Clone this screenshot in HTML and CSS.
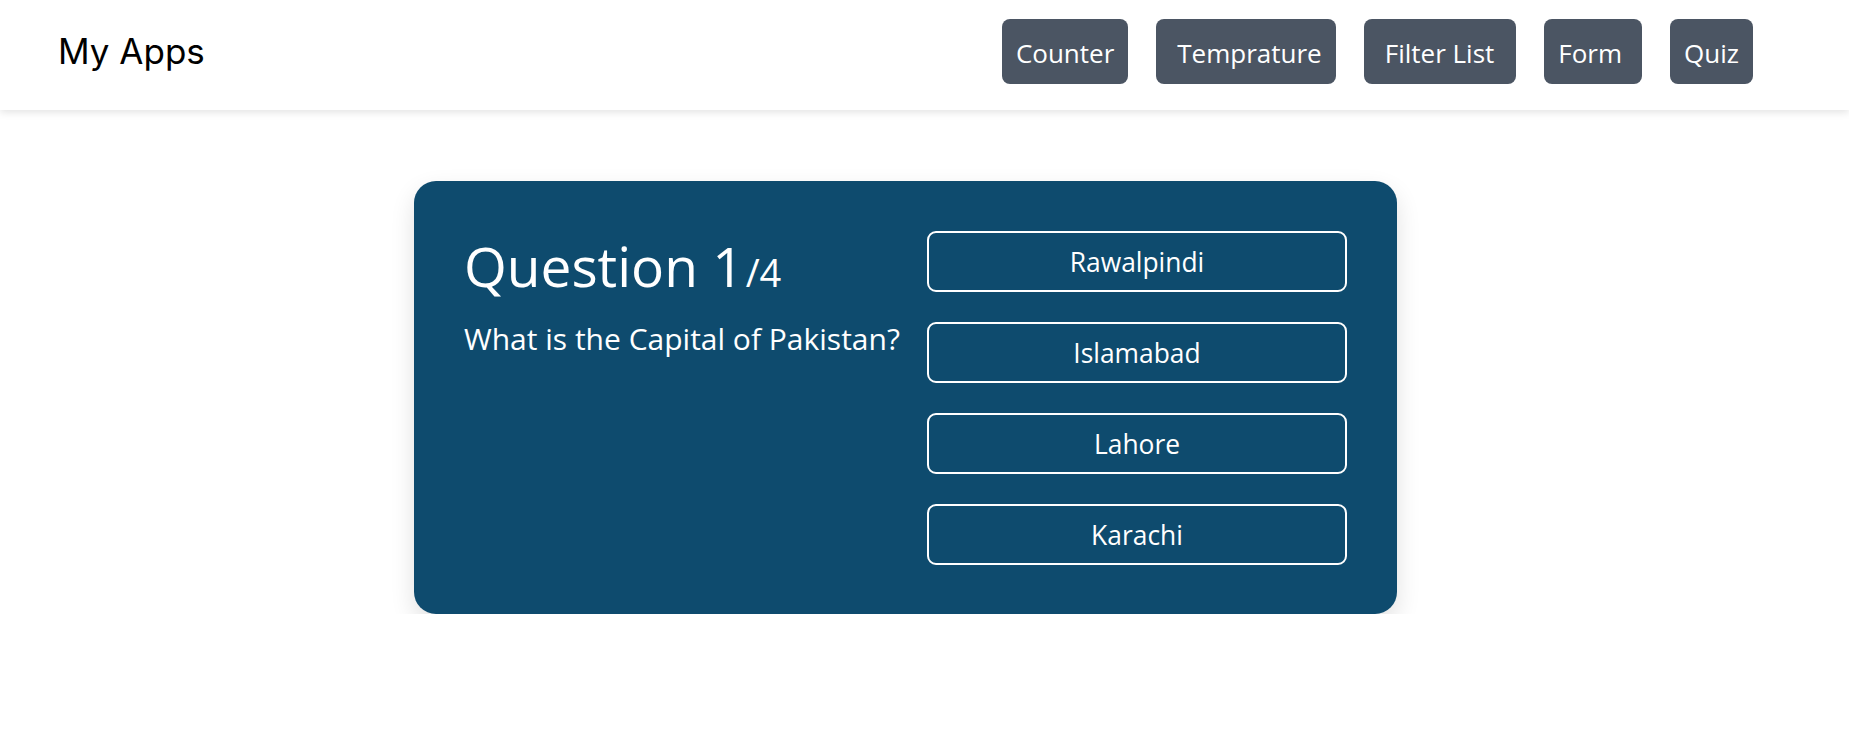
FILE: index.html
```html
<!DOCTYPE html>
<html lang="en">
<head>
<meta charset="utf-8">
<title>My Apps</title>
<link rel="stylesheet" href="styles.css">
</head>
<body>
<header class="topbar">
  <div class="brand">My Apps</div>
  <nav class="nav">
    <a class="nav-btn" href="#">Counter</a>
    <a class="nav-btn nav-btn--lead" href="#">Temprature</a>
    <a class="nav-btn nav-btn--roomy" href="#">Filter List</a>
    <a class="nav-btn nav-btn--trail" href="#">Form</a>
    <a class="nav-btn" href="#">Quiz</a>
  </nav>
</header>
<main class="main">
  <section class="quiz-card">
    <div class="question-col">
      <h1 class="question-count">Question 1<span class="question-total">/4</span></h1>
      <p class="question-text">What is the Capital of Pakistan?</p>
    </div>
    <div class="answers">
      <button class="answer">Rawalpindi</button>
      <button class="answer">Islamabad</button>
      <button class="answer">Lahore</button>
      <button class="answer">Karachi</button>
    </div>
  </section>
</main>
</body>
</html>
```
FILE: styles.css
```css
* { box-sizing: border-box; }

body {
  margin: 0;
  background: #ffffff;
  font-family: "Open Sans", "Noto Sans", sans-serif;
}

.topbar {
  height: 110px;
  display: flex;
  align-items: flex-start;
  justify-content: space-between;
  padding: 19px 96px 0 58px;
  background: #ffffff;
  box-shadow: 0 2px 8px rgba(0, 0, 0, 0.12);
  position: relative;
  z-index: 1;
}

.brand {
  font-family: "Inter", sans-serif;
  font-size: 35px;
  line-height: 65px;
  color: #000000;
}

.nav {
  display: flex;
  gap: 28px;
}

.nav-btn {
  height: 65px;
  display: flex;
  align-items: center;
  padding: 2px 14px 0;
  background: #4b5563;
  color: #ffffff;
  border-radius: 8px;
  text-decoration: none;
  font-size: 26px;
}

.nav-btn--lead { padding-left: 21px; }
.nav-btn--roomy { padding-left: 21px; padding-right: 22px; }
.nav-btn--trail { padding-right: 20px; }

.main {
  display: flex;
  justify-content: center;
  padding: 71px 38px 0 0;
}

.quiz-card {
  width: 983px;
  height: 433px;
  display: flex;
  justify-content: space-between;
  padding: 50px 50px 49px 50px;
  background: #0e4b6e;
  border-radius: 22px;
  box-shadow: 0 10px 25px rgba(0, 0, 0, 0.12);
  color: #ffffff;
}

.question-col {
  flex: 1;
}

.question-count {
  margin: 0;
  font-size: 55px;
  font-weight: 400;
  line-height: 70px;
}

.question-total {
  font-size: 38px;
  line-height: 1;
  margin-left: 2px;
}

.question-text {
  margin: 18px 0 0;
  font-size: 30px;
  line-height: 40px;
}

.answers {
  width: 420px;
  display: flex;
  flex-direction: column;
  gap: 30px;
}

.answer {
  height: 61px;
  background: transparent;
  border: 2px solid #ffffff;
  border-radius: 9px;
  color: #ffffff;
  font-family: "Open Sans", "Noto Sans", sans-serif;
  font-size: 26.4px;
  cursor: pointer;
}
```
